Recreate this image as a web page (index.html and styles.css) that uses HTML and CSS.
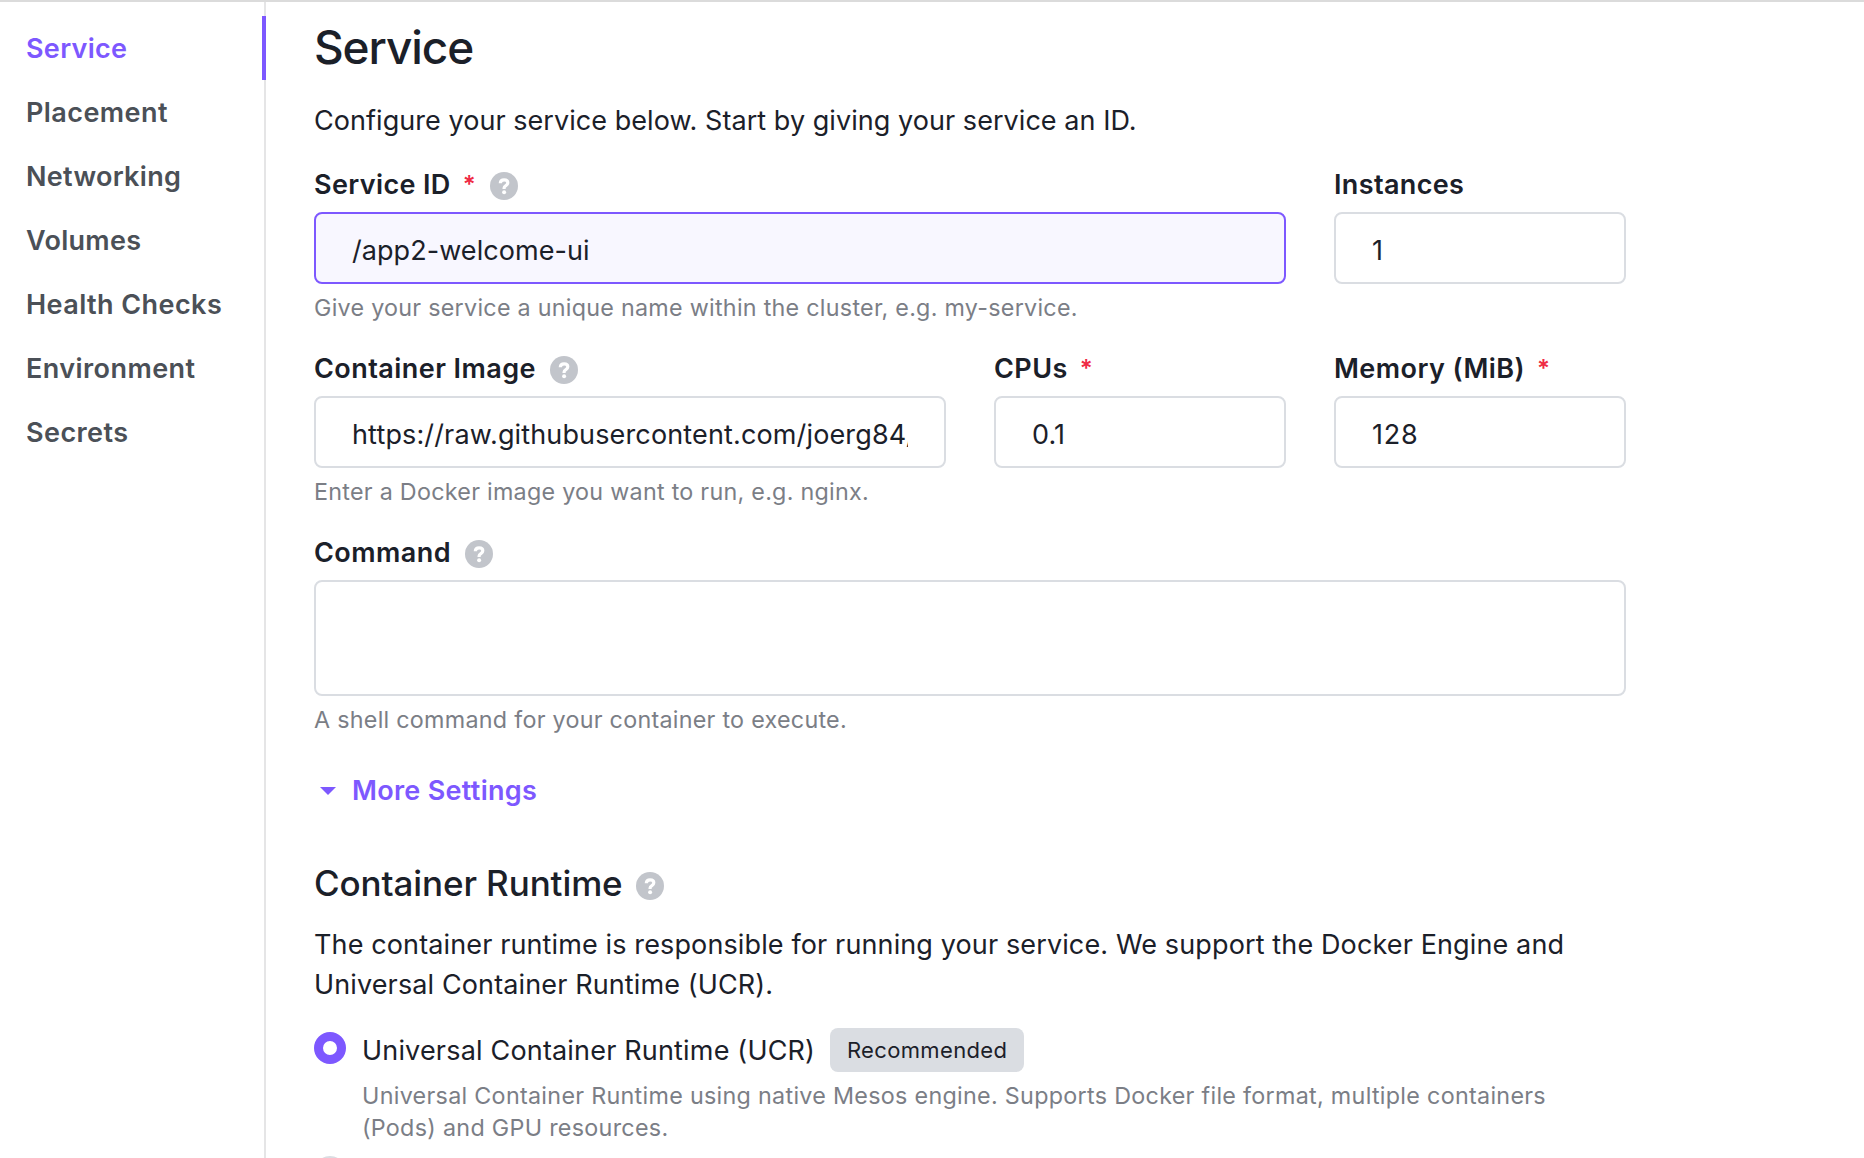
FILE: index.html
```html
<!DOCTYPE html>
<html lang="en">
<head>
<meta charset="utf-8">
<title>Service</title>
<link rel="stylesheet" href="styles.css">
</head>
<body>
<svg class="defs" aria-hidden="true">
  <symbol id="help" viewBox="0 0 28 28">
    <circle cx="14" cy="14" r="14" fill="#c2c5cb"/>
    <path d="M10.3 11.2c.1-2.2 1.5-3.3 3.8-3.3 2.2 0 3.7 1.1 3.7 2.9 0 1.4-.8 2.1-1.9 2.8-1.3.8-1.8 1.3-1.8 2.5v.8" fill="none" stroke="#fff" stroke-width="3.2"/>
    <circle cx="14.1" cy="20.3" r="2" fill="#fff"/>
  </symbol>
</svg>
<div class="layout">
  <nav class="sidebar">
    <a class="tab tab-active">Service</a>
    <a class="tab tab-wide">Placement</a>
    <a class="tab">Networking</a>
    <a class="tab">Volumes</a>
    <a class="tab tab-wide">Health Checks</a>
    <a class="tab tab-wide">Environment</a>
    <a class="tab tab-wide">Secrets</a>
  </nav>
  <main class="form">
    <h1 class="title">Service</h1>
    <p class="intro">Configure your service below. Start by giving your service an ID.</p>

    <div class="row row-first">
      <div class="field span-3">
        <label class="label">Service ID<span class="required">*</span><svg class="help-icon"><use href="#help"/></svg></label>
        <div class="input input-focus">/app2-welcome-ui</div>
        <p class="hint">Give your service a unique name within the cluster, e.g. my-service.</p>
      </div>
      <div class="field">
        <label class="label">Instances</label>
        <div class="input">1</div>
      </div>
    </div>

    <div class="row">
      <div class="field span-2">
        <label class="label label-wide">Container Image<svg class="help-icon"><use href="#help"/></svg></label>
        <div class="input input-url"><span class="value">https://raw.githubusercontent.com/joerg84/</span></div>
        <p class="hint">Enter a Docker image you want to run, e.g. nginx.</p>
      </div>
      <div class="field">
        <label class="label label-wide">CPUs<span class="required">*</span></label>
        <div class="input">0.1</div>
      </div>
      <div class="field">
        <label class="label label-wide">Memory (MiB)<span class="required">*</span></label>
        <div class="input input-digits">128</div>
      </div>
    </div>

    <div class="row">
      <div class="field span-4">
        <label class="label label-wide">Command<svg class="help-icon"><use href="#help"/></svg></label>
        <div class="input textarea"></div>
        <p class="hint">A shell command for your container to execute.</p>
      </div>
    </div>

    <a class="more"><svg class="caret" viewBox="0 0 16 8"><path d="M0 0h16L8 8z" fill="#7d58ff"/></svg>More Settings</a>

    <h2 class="subtitle">Container Runtime<svg class="help-icon"><use href="#help"/></svg></h2>
    <p class="text">The container runtime is responsible for running your service. We support the Docker Engine and Universal Container Runtime (UCR).</p>

    <div class="option option-first">
      <span class="radio radio-on"></span>
      <div>
        <div class="option-head">Universal Container Runtime (UCR)<span class="badge">Recommended</span></div>
        <p class="option-text">Universal Container Runtime using native Mesos engine. Supports Docker file format, multiple containers (Pods) and GPU resources.</p>
      </div>
    </div>
    <div class="option option-next">
      <span class="radio"></span>
    </div>
  </main>
</div>
</body>
</html>
```
FILE: styles.css
```css
* { box-sizing: border-box; }
body {
  margin: 0;
  height: 1158px;
  overflow: hidden;
  border-top: 2px solid #dbdbdb;
  background: #fff;
  color: #1b2029;
  font: 400 27px/40px Inter, "Liberation Sans", sans-serif;
}
h1, h2, p { margin: 0; }
.defs { display: none; }
.layout { display: flex; height: 1156px; }

.sidebar {
  flex: none;
  width: 266px;
  padding-top: 14px;
  border-right: 2px solid #e5e5e6;
}
.tab {
  display: block;
  height: 64px;
  margin-right: -2px;
  padding-left: 26px;
  color: #4b5057;
  font-weight: 600;
  line-height: 66px;
  letter-spacing: 0.3px;
}
.tab-wide { letter-spacing: 0.43px; }
.tab-active { color: #7d58ff; border-right: 4px solid #7d58ff; }

.form { flex: none; width: 1408px; padding: 17px 48px 0; }
.title { font-size: 46px; font-weight: 500; line-height: 56px; letter-spacing: -1.1px; }
.intro { margin-top: 26px; letter-spacing: 0.05px; white-space: nowrap; }

.row {
  display: grid;
  grid-template-columns: 292px 292px 292px 292px;
  column-gap: 48px;
  margin-top: 24px;
}
.row-first { margin-top: 23px; }
.row .span-2 { grid-column: span 2; }
.row .span-3 { grid-column: span 3; }
.row .span-4 { grid-column: span 4; }
.label {
  display: flex;
  align-items: center;
  height: 40px;
  padding-top: 2px;
  font-weight: 600;
  letter-spacing: 0.36px;
}
.label-wide { letter-spacing: 0.45px; }
.required { margin-left: 12px; color: #ef2b45; font-weight: 600; font-size: 24px; }
.help-icon { flex: none; width: 28px; height: 28px; margin: 2px 0 0 14px; }
.input {
  height: 72px;
  margin-top: 8px;
  padding: 0 36px;
  border: 2px solid #dadde2;
  border-radius: 8px;
  line-height: 74px;
  letter-spacing: 0.06px;
}
.input-focus { border-color: #7d58ff; background: #f8f7ff; }
.input-url { letter-spacing: 0.14px; }
.input-digits { letter-spacing: 0.8px; }
.value { display: block; height: 68px; overflow: hidden; white-space: nowrap; }
.textarea { height: 116px; }
.hint, .option-text { color: #7b7e86; font-size: 23.3px; line-height: 32px; letter-spacing: 0.27px; }
.hint { margin-top: 8px; }

.more {
  display: flex;
  align-items: center;
  height: 40px;
  margin-top: 34px;
  padding-top: 2px;
  color: #7d58ff;
  font-weight: 600;
  letter-spacing: 0.3px;
}
.caret { width: 16px; height: 8px; margin: 0 16px 0 6px; }

.subtitle {
  display: flex;
  align-items: center;
  margin-top: 49px;
  font-size: 35px;
  font-weight: 500;
  line-height: 48px;
  letter-spacing: -0.1px;
}
.subtitle .help-icon { margin: 6px 0 0 13px; }
.text { margin-top: 18px; letter-spacing: 0.125px; }

.option { display: flex; gap: 16px; margin-top: 24px; }
.option-first { margin-top: 23px; }
.option-next { margin-top: 8px; }
.radio {
  flex: none;
  width: 32px;
  height: 32px;
  margin-top: 4px;
  border: 2px solid #dadde2;
  border-radius: 50%;
}
.radio-on { border: 9px solid #7d58ff; }
.option-head { display: flex; align-items: center; height: 44px; padding-top: 2px; letter-spacing: 0.18px; }
.badge {
  width: 194px;
  height: 44px;
  margin: -2px 0 0 15px;
  border-radius: 8px;
  background: #dadde2;
  font-size: 22px;
  font-weight: 400;
  line-height: 44px;
  text-align: center;
  letter-spacing: 0.35px;
}
.option-text { margin-top: 8px; letter-spacing: 0.3px; }
```
